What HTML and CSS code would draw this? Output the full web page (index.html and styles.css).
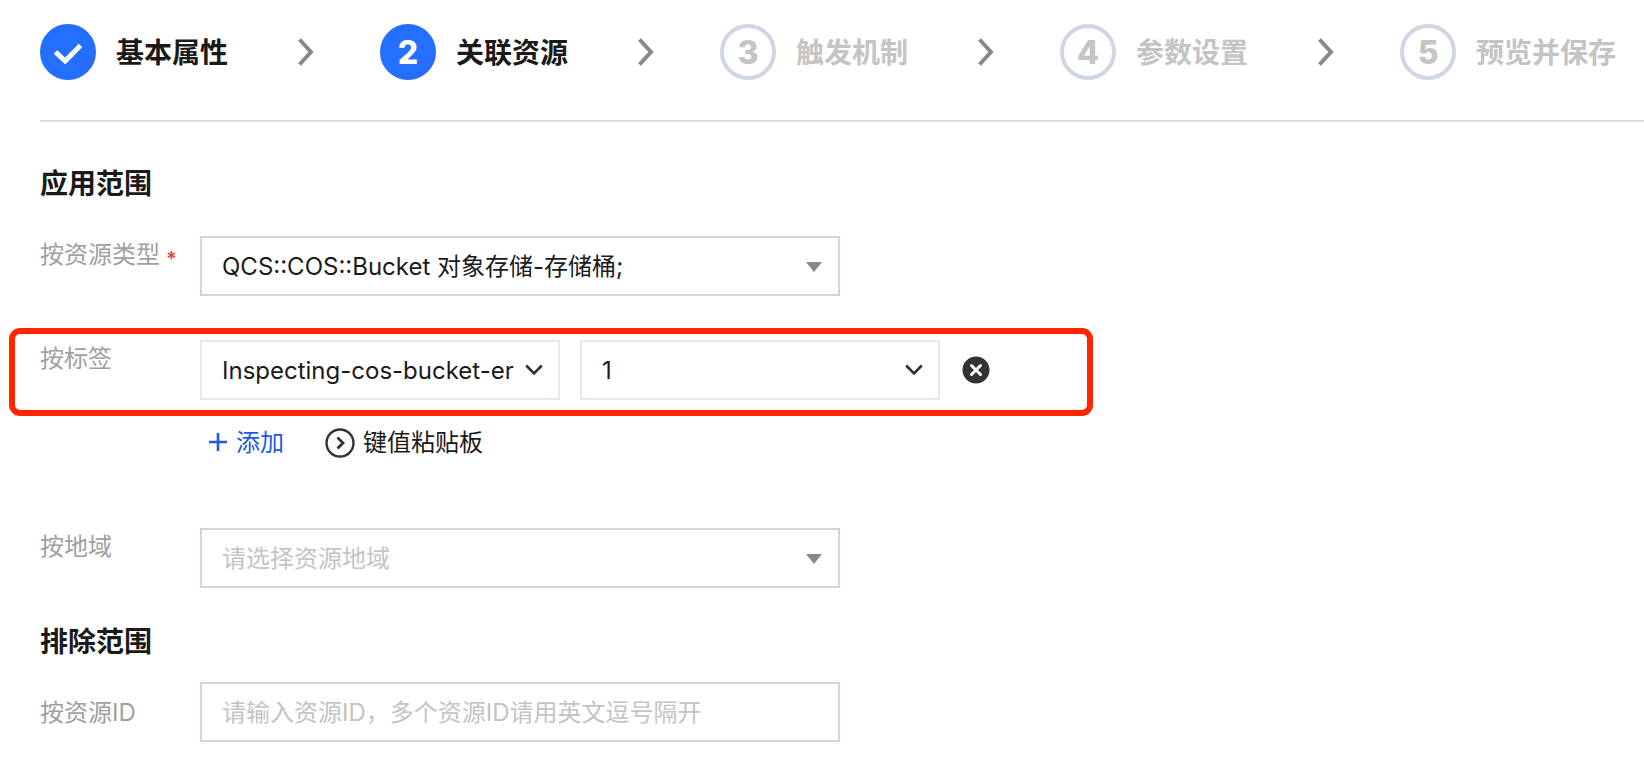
FILE: index.html
```
<!DOCTYPE html>
<html lang="zh-CN">
<head>
<meta charset="utf-8">
<meta name="viewport" content="width=device-width, initial-scale=1.0">
<title>关联资源</title>
<link rel="stylesheet" href="styles.css">
</head>
<body>

  <!-- Steps -->
  <header class="steps-bar">
    <ol class="steps">
      <li class="step step-done">
        <span class="step-num">
          <svg width="28" height="22" viewBox="0 0 28 22"><path d="M1.5 10 L11.2 19 L26.5 3.5" fill="none" stroke="#fff" stroke-width="5"/></svg>
        </span>
        <span class="step-label">基本属性</span>
        <svg class="step-arrow" width="16" height="28" viewBox="0 0 16 28"><path d="M1.5 1.5 L13 14 L1.5 26.5" fill="none" stroke="#888" stroke-width="4"/></svg>
      </li>
      <li class="step step-current" aria-current="step">
        <span class="step-num">2</span>
        <span class="step-label">关联资源</span>
        <svg class="step-arrow" width="16" height="28" viewBox="0 0 16 28"><path d="M1.5 1.5 L13 14 L1.5 26.5" fill="none" stroke="#888" stroke-width="4"/></svg>
      </li>
      <li class="step">
        <span class="step-num">3</span>
        <span class="step-label">触发机制</span>
        <svg class="step-arrow" width="16" height="28" viewBox="0 0 16 28"><path d="M1.5 1.5 L13 14 L1.5 26.5" fill="none" stroke="#888" stroke-width="4"/></svg>
      </li>
      <li class="step">
        <span class="step-num">4</span>
        <span class="step-label">参数设置</span>
        <svg class="step-arrow" width="16" height="28" viewBox="0 0 16 28"><path d="M1.5 1.5 L13 14 L1.5 26.5" fill="none" stroke="#888" stroke-width="4"/></svg>
      </li>
      <li class="step">
        <span class="step-num">5</span>
        <span class="step-label">预览并保存</span>
      </li>
    </ol>
  </header>

  <!-- Form -->
  <main>
    <form class="form">
      <section class="scope">
        <h2>应用范围</h2>

        <div class="row">
          <label class="row-label" for="type">按资源类型<span class="required">*</span></label>
          <div class="select">
            <select id="type" required>
              <option>QCS::COS::Bucket 对象存储-存储桶;</option>
            </select>
            <svg class="caret" width="16" height="10" viewBox="0 0 16 10"><path d="M0 0 H16 L8 10 Z" fill="#888"/></svg>
          </div>
        </div>

        <div class="row row-marked">
          <label class="row-label" for="tag-key">按标签</label>
          <div class="tags">
            <div class="select select-tag">
              <select id="tag-key">
                <option>Inspecting-cos-bucket-er</option>
              </select>
              <svg class="caret" width="18" height="12" viewBox="0 0 18 12"><path d="M1.2 1.5 L9 9.5 L16.8 1.5" fill="none" stroke="#333" stroke-width="2.6"/></svg>
            </div>
            <div class="select select-tag">
              <select id="tag-value" aria-label="标签值">
                <option>1</option>
              </select>
              <svg class="caret" width="18" height="12" viewBox="0 0 18 12"><path d="M1.2 1.5 L9 9.5 L16.8 1.5" fill="none" stroke="#333" stroke-width="2.6"/></svg>
            </div>
            <button class="remove" type="button" aria-label="删除">
              <svg width="28" height="28" viewBox="0 0 28 28"><circle cx="14" cy="14" r="13.5" fill="#333"/><path d="M9.5 9.5 L18.5 18.5 M18.5 9.5 L9.5 18.5" stroke="#fff" stroke-width="3" stroke-linecap="round"/></svg>
            </button>
          </div>
        </div>

        <div class="tag-actions">
          <button class="add" type="button">
            <svg width="20" height="20" viewBox="0 0 20 20"><path d="M1 9 H19 M10 0 V18" stroke="#1f5ae0" stroke-width="2.6"/></svg>
            添加
          </button>
          <button class="paste" type="button">
            <svg width="30" height="30" viewBox="0 0 30 30"><circle cx="15" cy="15" r="13.5" fill="none" stroke="#333" stroke-width="2.4"/><path d="M12.5 9.5 L18 15 L12.5 20.5" fill="none" stroke="#333" stroke-width="2.8"/></svg>
            键值粘贴板
          </button>
        </div>

        <div class="row">
          <label class="row-label" for="region">按地域</label>
          <div class="select">
            <select id="region" class="empty">
              <option>请选择资源地域</option>
            </select>
            <svg class="caret" width="16" height="10" viewBox="0 0 16 10"><path d="M0 0 H16 L8 10 Z" fill="#888"/></svg>
          </div>
        </div>
      </section>

      <section class="exclude">
        <h2>排除范围</h2>
        <div class="row row-center">
          <label class="row-label" for="ids">按资源ID</label>
          <input id="ids" class="text" type="text" placeholder="请输入资源ID，多个资源ID请用英文逗号隔开">
        </div>
      </section>
    </form>
  </main>

</body>
</html>
```
FILE: styles.css
```
* {box-sizing: border-box;}

body {
  margin: 0;
  background: #fff;
  color: #1a1a1a;
  font-family: Inter, "Noto Sans CJK SC", sans-serif;
  font-size: 24px;
  line-height: 36px;
}

button, input, select {
  font: inherit;
  color: inherit;
}

svg {
  display: block;
  flex: none;
}

/* steps */
.steps-bar {
  margin-left: 40px;
  padding: 24px 0 40px;
  border-bottom: 2px solid #ddd;
}

.steps {
  display: flex;
  margin: 0;
  padding: 0;
  list-style: none;
}

.step {
  display: flex;
  align-items: center;
  flex: none;
  color: #c4c4c4;
  font-size: 28px;
  font-weight: 600;
  white-space: nowrap;
}

.step-num {
  display: flex;
  align-items: center;
  justify-content: center;
  width: 56px;
  height: 56px;
  margin-right: 20px;
  padding-top: 2px;
  border: 4px solid #cfd5e1;
  border-radius: 50%;
  font-size: 32px;
  font-weight: 800;
}

.step-label {
  padding-top: 2px;
}

.step-arrow {
  margin: 0 66px 0 70px;
}

.step-done, .step-current {
  color: #1a1a1a;
}

.step-done .step-num, .step-current .step-num {
  border-color: #246fff;
  background: #246fff;
  color: #fff;
}

/* form */
.form {
  padding: 40px 40px 18px;
}

h2 {
  margin: 0 0 30px;
  font-size: 28px;
  font-weight: 600;
  line-height: 44px;
}

.exclude {
  margin-top: 32px;
}

.exclude h2 {
  margin-bottom: 18px;
}

.row {
  display: flex;
  position: relative;
}

.row-center {
  align-items: center;
}

.row-label {
  flex: none;
  width: 160px;
  padding-top: 1px;
  color: #a0a0a0;
}

.required {
  margin-left: 6px;
  color: #e54545;
  font-weight: 600;
  font-size: 20px;
  vertical-align: -3px;
  line-height: 20px;
}

.select {
  position: relative;
  width: 640px;
}

.select select, .text {
  display: block;
  width: 100%;
  height: 60px;
  padding: 2px 60px 0 20px;
  border: 2px solid #cfd5e1;
  border-radius: 0;
  background: #fff;
  appearance: none;
}

.text {
  width: 640px;
  padding: 0 20px;
}

.select .empty, .text::placeholder {
  color: #c4c4c4;
}

.caret {
  position: absolute;
  top: 26px;
  right: 18px;
  pointer-events: none;
}

.tags {
  display: flex;
  align-items: center;
  gap: 20px;
}

.select-tag {
  width: 360px;
}

.select-tag select {
  padding-right: 42px;
  border-color: #e7eaef;
}

.select-tag .caret {
  top: 24px;
  right: 17px;
}

.remove {
  padding: 0 2px;
  border: 0;
  background: none;
}

/* red frame round the tag filter */
.row-marked {
  margin-top: 44px;
}

.row-marked::after {
  content: "";
  position: absolute;
  box-sizing: border-box;
  top: -12px;
  bottom: -16px;
  left: -31px;
  width: 1084px;
  border: 6px solid #ff2600;
  border-radius: 11px;
  pointer-events: none;
}

.tag-actions {
  display: flex;
  gap: 41px;
  margin: 22px 0 64px 168px;
}

.add, .paste {
  display: flex;
  align-items: center;
  gap: 8px;
  padding: 0;
  border: 0;
  background: none;
  line-height: 42px;
}

.add {
  color: #1f5ae0;
}
```
